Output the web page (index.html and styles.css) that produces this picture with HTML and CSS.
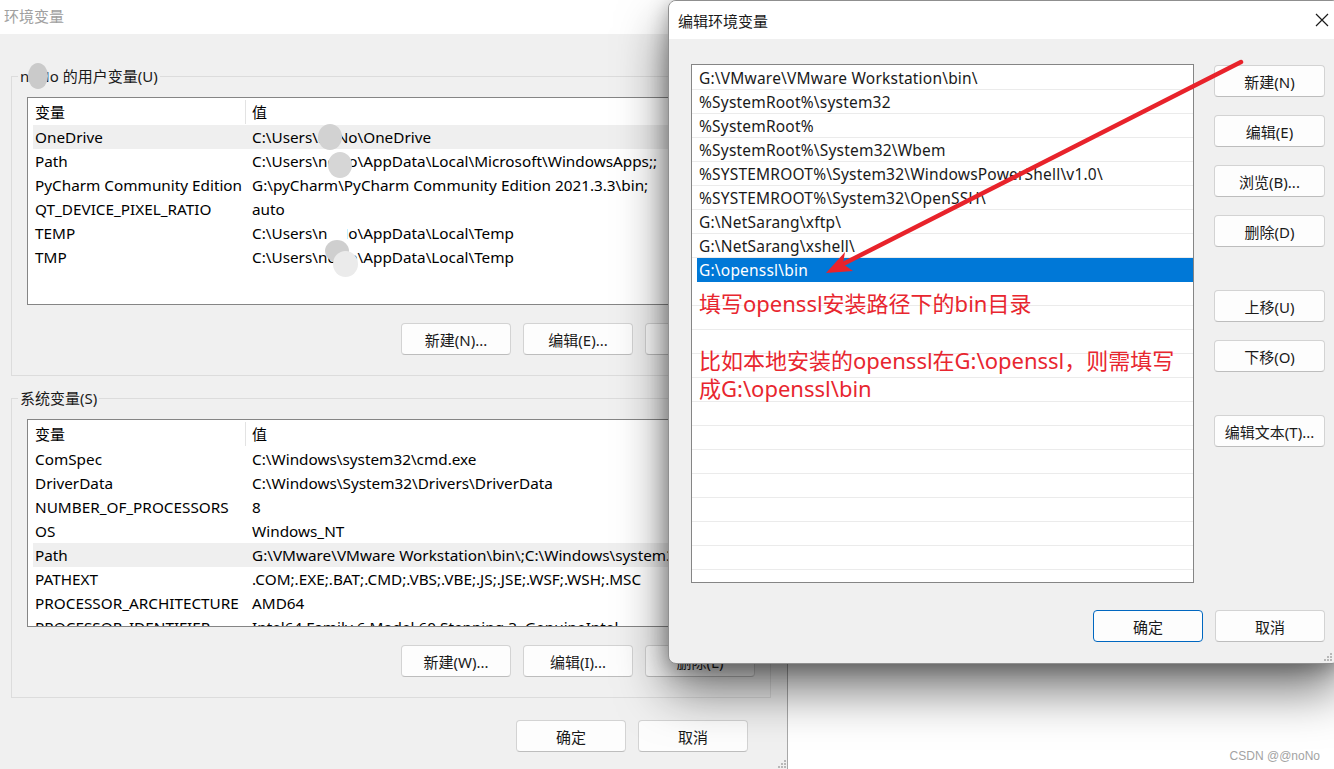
FILE: index.html
```html
<!DOCTYPE html>
<html lang="zh-CN">
<head>
<meta charset="utf-8">
<title>环境变量</title>
<link rel="stylesheet" href="styles.css">
</head>
<body>
<div class="screen">
  <div class="win main">
    <div class="titlebar">环境变量</div>
    <div class="content">
      <fieldset class="group">
        <legend>noNo 的用户变量(U)</legend>
        <div class="listview">
          <div class="lv-head"><span class="hc first">变量</span><span class="hc">值</span></div>
          <div class="lv-row hl"><span>OneDrive</span><span>C:\Users\noNo\OneDrive</span></div>
          <div class="lv-row"><span>Path</span><span>C:\Users\noNo\AppData\Local\Microsoft\WindowsApps;;</span></div>
          <div class="lv-row"><span>PyCharm Community Edition</span><span>G:\pyCharm\PyCharm Community Edition 2021.3.3\bin;</span></div>
          <div class="lv-row"><span>QT_DEVICE_PIXEL_RATIO</span><span>auto</span></div>
          <div class="lv-row"><span>TEMP</span><span>C:\Users\noNo\AppData\Local\Temp</span></div>
          <div class="lv-row"><span>TMP</span><span>C:\Users\noNo\AppData\Local\Temp</span></div>
        </div>
        <div class="btnrow">
          <button class="btn">新建(N)...</button>
          <button class="btn">编辑(E)...</button>
          <button class="btn">删除(D)</button>
        </div>
      </fieldset>
      <fieldset class="group sys">
        <legend>系统变量(S)</legend>
        <div class="listview">
          <div class="lv-head"><span class="hc first">变量</span><span class="hc">值</span></div>
          <div class="lv-row"><span>ComSpec</span><span>C:\Windows\system32\cmd.exe</span></div>
          <div class="lv-row"><span>DriverData</span><span>C:\Windows\System32\Drivers\DriverData</span></div>
          <div class="lv-row"><span>NUMBER_OF_PROCESSORS</span><span>8</span></div>
          <div class="lv-row"><span>OS</span><span>Windows_NT</span></div>
          <div class="lv-row hl"><span>Path</span><span>G:\VMware\VMware Workstation\bin\;C:\Windows\system32;C:\Windows</span></div>
          <div class="lv-row"><span>PATHEXT</span><span>.COM;.EXE;.BAT;.CMD;.VBS;.VBE;.JS;.JSE;.WSF;.WSH;.MSC</span></div>
          <div class="lv-row"><span>PROCESSOR_ARCHITECTURE</span><span>AMD64</span></div>
          <div class="lv-row"><span>PROCESSOR_IDENTIFIER</span><span>Intel64 Family 6 Model 60 Stepping 3, GenuineIntel</span></div>
        </div>
        <div class="btnrow">
          <button class="btn">新建(W)...</button>
          <button class="btn">编辑(I)...</button>
          <button class="btn">删除(L)</button>
        </div>
      </fieldset>
      <div class="footer">
        <button class="btn">确定</button>
        <button class="btn">取消</button>
      </div>
    </div>
    <svg class="grip grip-main" width="8" height="8" viewBox="0 0 8 8"><g fill="#b8b8b8"><rect x="6" y="0" width="2" height="2"/><rect x="3" y="3" width="2" height="2"/><rect x="6" y="3" width="2" height="2"/><rect x="0" y="6" width="2" height="2"/><rect x="3" y="6" width="2" height="2"/><rect x="6" y="6" width="2" height="2"/></g></svg>
  </div>

  <div class="win edit">
    <div class="titlebar">
      <span>编辑环境变量</span>
      <svg class="close" width="14" height="14" viewBox="0 0 14 14"><path d="M1 1L13 13M13 1L1 13" stroke="#1a1a1a" stroke-width="1.2" fill="none"/></svg>
    </div>
    <div class="edit-body">
      <div class="pathlist">
        <div class="item">G:\VMware\VMware Workstation\bin\</div>
        <div class="item">%SystemRoot%\system32</div>
        <div class="item">%SystemRoot%</div>
        <div class="item">%SystemRoot%\System32\Wbem</div>
        <div class="item">%SYSTEMROOT%\System32\WindowsPowerShell\v1.0\</div>
        <div class="item">%SYSTEMROOT%\System32\OpenSSH\</div>
        <div class="item">G:\NetSarang\xftp\</div>
        <div class="item">G:\NetSarang\xshell\</div>
        <div class="item sel">G:\openssl\bin</div>
        <div class="item"></div><div class="item"></div><div class="item"></div>
        <div class="item"></div><div class="item"></div><div class="item"></div>
        <div class="item"></div><div class="item"></div><div class="item"></div>
        <div class="item"></div><div class="item"></div><div class="item"></div>
        <div class="item"></div>
      </div>
      <div class="sidebtns">
        <button class="btn">新建(N)</button>
        <button class="btn">编辑(E)</button>
        <button class="btn">浏览(B)...</button>
        <button class="btn">删除(D)</button>
        <button class="btn sep">上移(U)</button>
        <button class="btn">下移(O)</button>
        <button class="btn sep">编辑文本(T)...</button>
      </div>
    </div>
    <div class="edit-footer">
      <button class="btn default">确定</button>
      <button class="btn">取消</button>
    </div>
    <svg class="grip grip-edit" width="8" height="8" viewBox="0 0 8 8"><g fill="#b8b8b8"><rect x="6" y="0" width="2" height="2"/><rect x="3" y="3" width="2" height="2"/><rect x="6" y="3" width="2" height="2"/><rect x="0" y="6" width="2" height="2"/><rect x="3" y="6" width="2" height="2"/><rect x="6" y="6" width="2" height="2"/></g></svg>
  </div>

  <div class="blot b1"></div>
  <div class="blot b2"></div>
  <div class="blot b3"></div>
  <div class="blot b4w"></div>
  <div class="blot b4"></div>
  <div class="blot b5"></div>

  <div class="note">
    <p>填写openssl安装路径下的bin目录</p>
    <p class="second">比如本地安装的openssl在G:\openssl，则需填写<br>成G:\openssl\bin</p>
  </div>

  <svg class="arrow" width="1334" height="769" viewBox="0 0 1334 769">
    <line x1="1241" y1="62" x2="845" y2="263" stroke="#e8232b" stroke-width="4.5" stroke-linecap="round"/>
    <polygon points="826,273 853,271 843,264 845,252" fill="#e8232b"/>
  </svg>

  <div class="watermark">CSDN @@noNo</div>
</div>
</body>
</html>
```
FILE: styles.css
```css
* { box-sizing: border-box; margin: 0; padding: 0; }

html, body {
  width: 1334px;
  height: 769px;
  overflow: hidden;
  background: #ffffff;
}

body {
  font-family: "Noto Sans", "Noto Sans CJK SC", sans-serif;
  font-size: 15px;
  color: #000;
}

.screen {
  position: relative;
  width: 1334px;
  height: 769px;
  overflow: hidden;
}

/* ---------- main window ---------- */
.main {
  position: relative;
  width: 788px;
  height: 769px;
  background: #f0f0f0;
  border-right: 1px solid #a8a8a8;
  display: flex;
  flex-direction: column;
}

.main .titlebar {
  height: 34px;
  flex: none;
  background: #fff;
  padding-left: 4px;
  line-height: 32px;
  color: #a0a0a0;
}

.content {
  padding: 0 16px 0 11px;
}

fieldset.group {
  margin-top: 31px;
  border: 1px solid #dcdcdc;
  padding: 0 15px 20px 15px;
  min-width: 0;
}

fieldset.group.sys {
  margin-top: 11px;
}

legend {
  margin-left: -9px;
  padding: 0 2px;
  line-height: 22px;
  color: #1a1a1a;
}

.listview {
  margin-top: 10px;
  height: 208px;
  border: 1px solid #858585;
  background: #fff;
  padding-left: 5px;
  overflow: hidden;
}

.lv-head {
  display: grid;
  grid-template-columns: 213px 1fr;
  height: 27px;
  align-items: center;
}

.hc { padding-left: 2px; white-space: nowrap; }
.hc.first { border-right: 1px solid #e3e3e3; height: 24px; line-height: 24px; }
.lv-head .hc:last-child { padding-left: 6px; }

.lv-row {
  display: grid;
  grid-template-columns: 217px 1fr;
  height: 24px;
  line-height: 24px;
  white-space: nowrap;
  font-size: 15.3px;
}

.lv-row span { padding-left: 2px; overflow: hidden; }
.lv-row.hl { background: #efefef; }

.btnrow {
  display: flex;
  justify-content: flex-end;
  gap: 12px;
  margin-top: 18px;
}

.btn {
  width: 110px;
  height: 32px;
  flex: none;
  border: 1px solid #d3d3d3;
  border-bottom-color: #bdbdbd;
  border-radius: 4px;
  background: #fdfdfd;
  font-family: inherit;
  font-size: 15px;
  color: #1a1a1a;
}

.footer {
  display: flex;
  justify-content: flex-end;
  gap: 12px;
  margin-top: 22px;
  padding-right: 23px;
}

.grip { position: absolute; }
.grip-main { right: 1px; bottom: 1px; }
.grip-edit { right: 7px; bottom: 2px; }

/* ---------- edit window ---------- */
.edit {
  position: absolute;
  left: 668px;
  top: 0;
  width: 672px;
  height: 664px;
  background: #f0f0f0;
  border: 1px solid #8f8f8f;
  border-radius: 8px;
  overflow: hidden;
  box-shadow: 0 26px 50px rgba(0, 0, 0, 0.55), 0 4px 20px rgba(0, 0, 0, 0.28);
}

.edit .titlebar {
  height: 38px;
  background: #fff;
  display: flex;
  align-items: center;
  justify-content: space-between;
  padding: 0 10px 0 9px;
  color: #1a1a1a;
}

.close { display: block; }

.edit-body {
  display: flex;
  gap: 20px;
  padding: 25px 0 0 22px;
}

.pathlist {
  width: 503px;
  height: 519px;
  border: 1px solid #858585;
  background: #fff;
  padding-top: 1px;
  overflow: hidden;
  flex: none;
}

.item {
  height: 24px;
  line-height: 22px;
  padding-top: 1px;
  border-bottom: 1px solid #ebebeb;
  padding-left: 7px;
  white-space: nowrap;
  color: #1a1a1a;
  font-size: 15.5px;
  letter-spacing: 0.2px;
}

.item.sel {
  margin-left: 5px;
  padding-left: 2px;
  background: #0078d7;
  color: #fff;
  border-bottom-color: #0078d7;
}

.sidebtns {
  display: flex;
  flex-direction: column;
  gap: 18px;
  padding-top: 1px;
}

.sidebtns .btn { width: 111px; }
.sidebtns .btn.sep { margin-top: 25px; }

.edit-footer {
  display: flex;
  justify-content: flex-end;
  gap: 12px;
  margin-top: 27px;
  padding-right: 14px;
}

.edit-footer .btn { width: 110px; }
.btn.default { border: 1px solid #0067c0; }

/* ---------- overlays ---------- */
.blot {
  position: absolute;
  border-radius: 50%;
}
.b1 { left: 28px; top: 63px; width: 20px; height: 26px; background: #cacaca; }
.b2 { left: 318px; top: 124px; width: 24px; height: 26px; background: #d2d2d2; }
.b3 { left: 328px; top: 152px; width: 24px; height: 26px; background: #d6d6d6; }
.b4w { left: 327px; top: 224px; width: 20px; height: 20px; border-radius: 4px; background: #ffffff; }
.b4 { left: 325px; top: 240px; width: 24px; height: 22px; background: #cfcfcf; }
.b5 { left: 333px; top: 251px; width: 25px; height: 26px; background: #ebebeb; }

.note {
  position: absolute;
  left: 699px;
  top: 289px;
  color: #e8262f;
  font-size: 22px;
  line-height: 28px;
  white-space: nowrap;
}

.note .second { margin-top: 29px; }

.arrow {
  position: absolute;
  left: 0;
  top: 0;
  pointer-events: none;
}

.watermark {
  position: absolute;
  right: 14px;
  bottom: 6px;
  font-family: "Liberation Sans", Arial, sans-serif;
  font-size: 12px;
  color: #a3a3a3;
}
```
